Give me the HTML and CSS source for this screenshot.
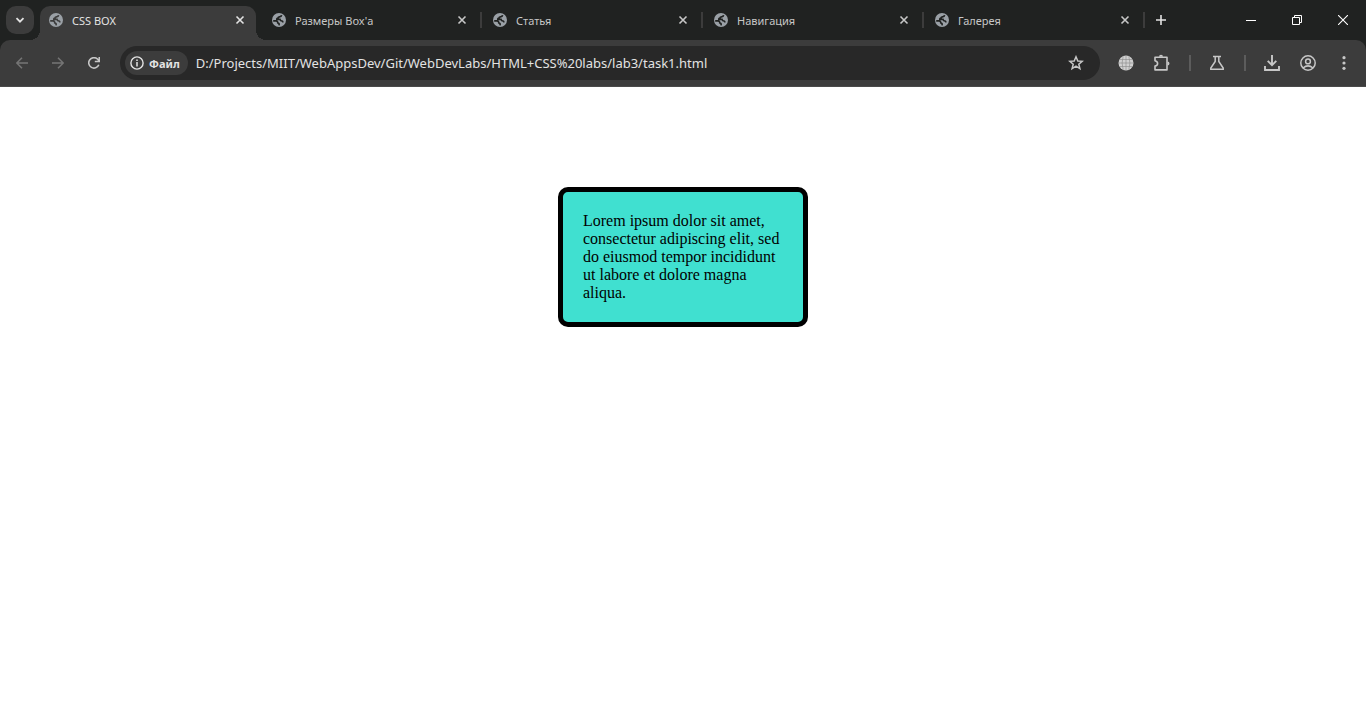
FILE: index.html
```html
<!DOCTYPE html>
<html lang="ru">
<head>
<meta charset="utf-8">
<title>CSS BOX</title>
<link rel="stylesheet" href="styles.css">
</head>
<body>
<svg class="defs" aria-hidden="true">
  <symbol id="globe" viewBox="0 0 14 14"><circle cx="7" cy="7" r="7" fill="#9aa0a6"/><path d="M9.6 2.2Q9.4 3.8 7.4 3.8 6 4 6 5.2 4.6 5.4 4.8 6.4H8Q8.4 8 10 8 11.2 8.4 10.4 9.4M1.2 7.8H4Q5.8 8 5.8 9.8 7.6 10 7 12.4" fill="none" stroke="currentColor" stroke-width="1.7"/></symbol>
  <symbol id="cross" viewBox="0 0 10 10"><path d="M1.5 1.5 8.5 8.5M8.5 1.5 1.5 8.5" fill="none" stroke="currentColor" stroke-width="1.6"/></symbol>
</svg>
<header class="browser">
  <div class="strip">
    <button class="tab-search" aria-label="Поиск вкладок"><svg width="10" height="10" viewBox="0 0 10 10"><path d="M1.5 3.2 5 6.7 8.5 3.2" fill="none" stroke="currentColor" stroke-width="1.8"/></svg></button>
    <nav class="tabs">
      <div class="tab active"><svg class="favicon"><use href="#globe"/></svg><span class="title">CSS BOX</span><button class="close" aria-label="Закрыть"><svg><use href="#cross"/></svg></button></div>
      <div class="tab"><svg class="favicon"><use href="#globe"/></svg><span class="title">Размеры Box'а</span><button class="close" aria-label="Закрыть"><svg><use href="#cross"/></svg></button></div>
      <div class="tab"><svg class="favicon"><use href="#globe"/></svg><span class="title">Статья</span><button class="close" aria-label="Закрыть"><svg><use href="#cross"/></svg></button></div>
      <div class="tab"><svg class="favicon"><use href="#globe"/></svg><span class="title">Навигация</span><button class="close" aria-label="Закрыть"><svg><use href="#cross"/></svg></button></div>
      <div class="tab"><svg class="favicon"><use href="#globe"/></svg><span class="title">Галерея</span><button class="close" aria-label="Закрыть"><svg><use href="#cross"/></svg></button></div>
      <button class="new-tab" aria-label="Новая вкладка"><svg width="10" height="10" viewBox="0 0 10 10"><path d="M5 0V10M0 5H10" stroke="currentColor" stroke-width="1.6"/></svg></button>
    </nav>
    <div class="window-controls">
      <button aria-label="Свернуть"><svg width="10" height="10" viewBox="0 0 10 10"><path d="M0 5.5H10" stroke="#fff"/></svg></button>
      <button aria-label="Восстановить"><svg width="10" height="10" viewBox="0 0 10 10"><path d="M.5 2.5H7.5V9.5H.5ZM2.5 2.5V.5H9.5V7.5H7.5" fill="none" stroke="#fff"/></svg></button>
      <button aria-label="Закрыть окно"><svg width="10" height="10" viewBox="0 0 10 10"><path d="M0 0 10 10M10 0 0 10" stroke="#fff" stroke-width="1.1"/></svg></button>
    </div>
  </div>
  <div class="toolbar">
    <div class="group">
      <button class="icon" disabled aria-label="Назад"><svg width="12" height="12" viewBox="0 0 12 12"><path d="M12 6H1M6 .7.8 6 6 11.3" fill="none" stroke="currentColor" stroke-width="1.5"/></svg></button>
      <button class="icon" disabled aria-label="Вперёд"><svg width="12" height="12" viewBox="0 0 12 12"><path d="M0 6H11M6 .7 11.2 6 6 11.3" fill="none" stroke="currentColor" stroke-width="1.5"/></svg></button>
      <button class="icon" aria-label="Обновить"><svg width="12" height="12" viewBox="0 0 12 12"><path d="M10.8 7.7A5.2 5.2 0 1 1 9.7 2.3L11.2 3.9M11.3 0V4.5H6.8" fill="none" stroke="currentColor" stroke-width="1.6"/></svg></button>
    </div>
    <div class="address">
      <button class="chip"><svg width="14" height="14" viewBox="0 0 14 14"><circle cx="7" cy="7" r="6.1" fill="none" stroke="currentColor" stroke-width="1.4"/><path d="M7 6V10.5M7 3.4V5" stroke="currentColor" stroke-width="1.5"/></svg>Файл</button>
      <input class="url" type="text" aria-label="Адрес" value="D:/Projects/MIIT/WebAppsDev/Git/WebDevLabs/HTML+CSS%20labs/lab3/task1.html">
      <button class="icon" aria-label="Добавить в закладки"><svg width="16" height="16" viewBox="0 0 16 16"><path d="M8 1.8 9.8 6 14.2 6.3 10.8 9.2 11.9 13.6 8 11.2 4.1 13.6 5.2 9.2 1.8 6.3 6.2 6Z" fill="none" stroke="currentColor" stroke-width="1.5"/></svg></button>
    </div>
    <div class="group">
      <button class="icon" aria-label="Расширение"><svg width="16" height="16" viewBox="0 0 16 16"><circle cx="8" cy="8" r="7.5" fill="#d0d0d0"/><path d="M1.5 4.5H14.5M1.5 11.5H14.5M8 .5V15.5M.5 8H15.5M5.2 1.2Q3 8 5.2 14.8M10.8 1.2Q13 8 10.8 14.8" fill="none" stroke="#888" stroke-width=".6"/></svg></button>
      <button class="icon" aria-label="Расширения"><svg width="18" height="18" viewBox="0 0 18 18"><path d="M2 3.2H14V15.9H2V12.1Q4.6 11.4 4.6 9.4T2 6.7Z" fill="none" stroke="currentColor" stroke-width="1.6" stroke-linejoin="round"/><path d="M6 2.8a2 2 0 0 1 4 0ZM14.5 7.4a2 2 0 0 1 0 4Z" fill="currentColor"/></svg></button>
    </div>
    <span class="divider"></span>
    <button class="icon" aria-label="Эксперименты"><svg width="16" height="16" viewBox="0 0 16 16"><path d="M4 1.6H12M6.2 2V6.4L1.8 13V14.2H14.2V13L9.8 6.4V2" fill="none" stroke="currentColor" stroke-width="1.5"/></svg></button>
    <span class="divider"></span>
    <div class="group">
      <button class="icon" aria-label="Загрузки"><svg width="16" height="16" viewBox="0 0 16 16"><path d="M8 0V10M3.7 5.8 8 10.1 12.3 5.8M1 11V15H15V11" fill="none" stroke="currentColor" stroke-width="1.9"/></svg></button>
      <button class="icon" aria-label="Профиль"><svg width="16" height="16" viewBox="0 0 16 16"><circle cx="8" cy="8" r="7.2" fill="none" stroke="currentColor" stroke-width="1.5"/><circle cx="8" cy="6.4" r="2.4" fill="none" stroke="currentColor" stroke-width="1.5"/><path d="M3 13Q8 8.8 13 13" fill="none" stroke="currentColor" stroke-width="1.5"/></svg></button>
      <button class="icon" aria-label="Меню"><svg width="16" height="16" viewBox="0 0 16 16" fill="currentColor"><circle cx="8" cy="2.7" r="1.6"/><circle cx="8" cy="8" r="1.6"/><circle cx="8" cy="13.3" r="1.6"/></svg></button>
    </div>
  </div>
</header>
<main class="page">
  <div class="box">Lorem ipsum dolor sit amet, consectetur adipiscing elit, sed do eiusmod tempor incididunt ut labore et dolore magna aliqua.</div>
</main>
</body>
</html>
```

FILE: styles.css
```css
* { box-sizing: border-box; }
body { margin: 0; background: #fff; font-family: "Noto Sans", "Open Sans", sans-serif; }
button { display: flex; align-items: center; justify-content: center; margin: 0; padding: 0; border: 0; background: none; color: inherit; font: inherit; }
.defs { display: none; }
.browser { background: #202221; color: #e3e3e3; }

.strip { display: flex; height: 40px; }
.tab-search { flex: none; width: 28px; height: 28px; margin: 6px; border-radius: 10px; background: #3c3c3c; }
.tabs { display: flex; flex: 1; min-width: 0; padding-top: 6px; }
.tab { position: relative; display: flex; flex: 0 1 221px; align-items: center; min-width: 0; height: 28px; padding: 0 14px 0 12px; font-size: 11px; color: #c7c7c7; }
.tab::after { content: ""; position: absolute; top: 6px; right: -1px; width: 2px; height: 16px; background: #3c3c3c; }
.tab .favicon { color: #202221; }
.tab.active { flex-basis: 216px; height: 34px; margin-right: 4px; padding: 0 11px 6px 9px; border-radius: 10px 10px 0 0; background: #3c3c3c; color: #e3e3e3; }
.tab.active .favicon { color: #3c3c3c; }
.tab.active::before, .tab.active::after { content: ""; position: absolute; top: auto; bottom: 0; width: 10px; height: 10px; }
.tab.active::before { left: -10px; background: radial-gradient(circle at 0 0, transparent 10px, #3c3c3c 10px); }
.tab.active::after { right: -10px; background: radial-gradient(circle at 100% 0, transparent 10px, #3c3c3c 10px); }
.favicon { flex: none; width: 14px; height: 14px; margin-right: 9px; }
.title { flex: 1; overflow: hidden; padding-top: 2px; line-height: 16px; white-space: nowrap; }
.close svg { width: 10px; height: 10px; }
.new-tab { width: 28px; height: 28px; margin-left: 3px; }
.window-controls { display: flex; }
.window-controls button { width: 46px; height: 40px; }

.toolbar { display: flex; align-items: center; height: 47px; padding: 0 8px; border-bottom: 1px solid #4a4a4a; border-radius: 10px 10px 0 0; background: #3c3c3c; color: #c7c7c7; }
.group { display: flex; gap: 8px; }
.icon { flex: none; width: 28px; height: 28px; }
.icon:disabled { color: #757575; }
.address { display: flex; flex: 1; align-items: center; min-width: 0; height: 34px; margin: 0 12px; padding: 0 10px 0 5px; border-radius: 17px; background: #282828; }
.chip { flex: none; gap: 5px; height: 24px; padding: 0 8px 0 5px; border-radius: 12px; background: #3c3c3c; color: #e3e3e3; font-size: 11px; font-weight: 700; }
.url { flex: 1; min-width: 0; margin-left: 8px; padding: 0; border: 0; outline: 0; background: none; color: #e3e3e3; font-family: inherit; font-size: 13px; line-height: 20px; }
.divider { flex: none; width: 2px; height: 16px; margin: 0 12px 0 13px; background: #5c5c5c; }

.page { padding: 100px 20px; }
.box { width: 250px; max-width: 100%; margin: 0 auto; padding: 20px; border: 5px solid #000; border-radius: 10px; background: turquoise; color: #000; font-family: "Liberation Serif", "Times New Roman", serif; font-size: 16px; line-height: 18px; }
```
